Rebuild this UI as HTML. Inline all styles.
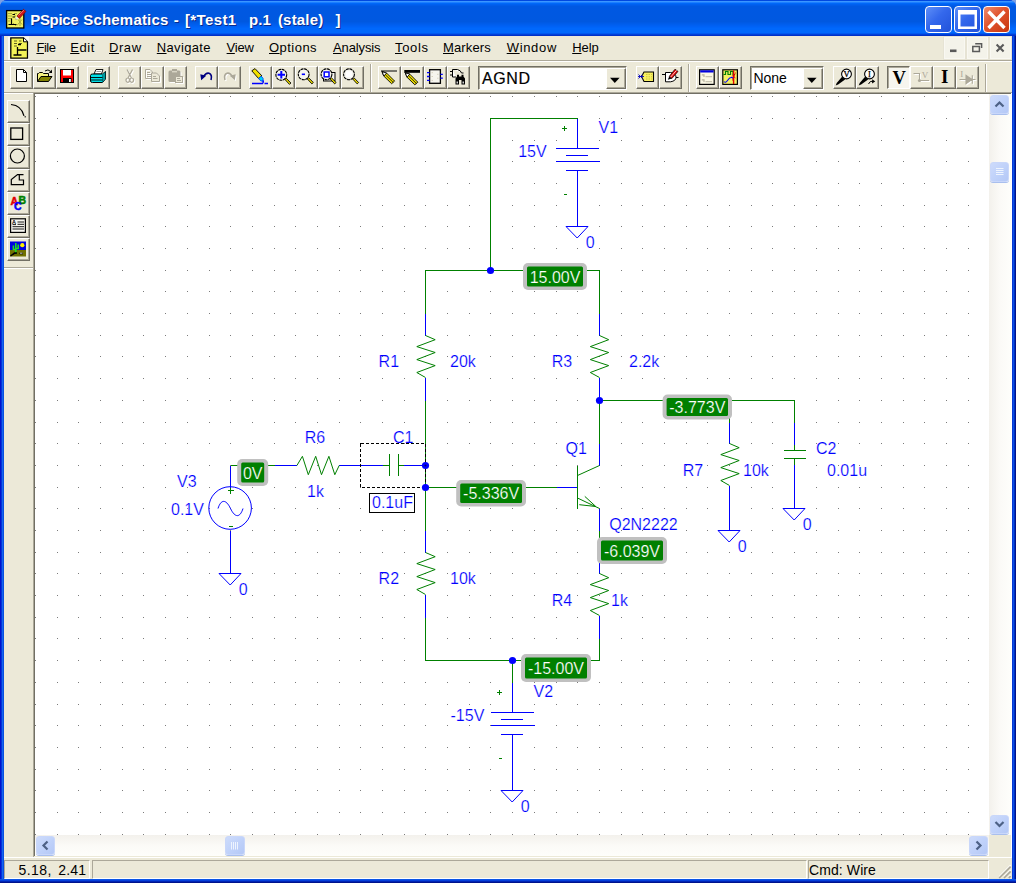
<!DOCTYPE html><html><head><meta charset="utf-8"><title>PSpice Schematics</title><style>
*{box-sizing:border-box;margin:0;padding:0}
html,body{width:1016px;height:883px;overflow:hidden;background:#7DA0E4}
body{position:relative;font-family:"Liberation Sans",sans-serif;font-size:13px;color:#000}
.abs{position:absolute}
#frame{left:0;top:0;width:1016px;height:883px;background:#0746DA;border-radius:7px 7px 0 0}
#lb{left:0;top:36px;width:4px;height:845px;background:linear-gradient(90deg,#0012CE 0.5px,#0434D8 1.5px,#1464F0 2.5px,#0850E0 3.5px)}
#rb{left:1012px;top:36px;width:4px;height:845px;background:linear-gradient(90deg,#0838D4 0.5px,#0A50E8 1.5px,#0030C0 2.5px,#00128C 3.5px)}
#bb{left:0;top:879px;width:1016px;height:4px;background:linear-gradient(180deg,#0B54E6 0.5px,#0540DC 1.5px,#0024B4 2.5px,#00138C 3.5px)}
#title{left:0;top:0;width:1016px;height:36px;border-radius:7px 7px 0 0;
 background:linear-gradient(180deg,#0048E0 0.5px,#3A96FF 1.5px,#1C7EFF 2.5px,#0068F8 3.5px,#0060F0 4.5px,#0058E2 6.5px,#0058E0 21.5px,#0062F6 26.5px,#0068FC 28.5px,#0068FC 32.5px,#0058F0 33.5px,#0040D8 34.5px,#0030C8 35.5px)}
#ttext{left:30px;top:10px;color:#fff;font-weight:bold;font-size:15px;line-height:20px;white-space:pre;text-shadow:1px 1px 0 #0A2A8C;letter-spacing:0.43px}
#client{left:4px;top:36px;width:1008px;height:843px;background:#ECE9D8}
.mi{top:40px;height:16px;line-height:16px;font-size:13px;white-space:pre}
.mi u{text-decoration:underline;text-underline-offset:1px}
.tb{background:#ECE9D8;border-top:1px solid #fff;border-left:1px solid #fff;border-right:1px solid #716F64;border-bottom:1px solid #716F64;box-shadow:inset -1px -1px 0 #ACA899}
.tbp{background:#F6F5EE;border-top:1px solid #716F64;border-left:1px solid #716F64;border-right:1px solid #fff;border-bottom:1px solid #fff;box-shadow:inset 1px 1px 0 #ACA899}
.sep{width:2px;border-left:1px solid #ACA899;border-right:1px solid #fff}
.combo{background:#fff;border-top:1px solid #716F64;border-left:1px solid #716F64;border-right:1px solid #fff;border-bottom:1px solid #fff;box-shadow:inset 1px 1px 0 #ACA899}
.cbtn{background:#ECE9D8;border-top:1px solid #fff;border-left:1px solid #fff;border-right:1px solid #716F64;border-bottom:1px solid #716F64;box-shadow:inset -1px -1px 0 #ACA899}
.sb{background:#ECE9D8}
.sbtn{background:linear-gradient(135deg,#CDDBFB 0,#C0D2FA 50%,#B4C8F6 100%);border:1px solid #C9D7FA;border-radius:3px;box-shadow:0 1px 0 #A9BFEE}
.sp{border-top:1px solid #ACA899;border-left:1px solid #ACA899;border-right:1px solid #fff;border-bottom:1px solid #fff}
</style></head><body>
<div id="frame" class="abs"></div>
<div id="title" class="abs"></div><div id="lb" class="abs"></div><div id="rb" class="abs"></div><div id="bb" class="abs"></div>
<div id="client" class="abs"></div>
<div id="ttext" class="abs" style="left:0;width:400px;height:20px"><span class="abs" style="left:30.2px;top:0;letter-spacing:-0.3px">PSpice</span><span class="abs" style="left:83.2px;top:0;letter-spacing:0.2px">Schematics</span><span class="abs" style="left:173.8px;top:0;letter-spacing:0.9px">-</span><span class="abs" style="left:184.9px;top:0;letter-spacing:0.4px">[*Test1</span><span class="abs" style="left:248.9px;top:0;letter-spacing:0.1px">p.1</span><span class="abs" style="left:277.9px;top:0;letter-spacing:0.2px">(stale)</span><span class="abs" style="left:335.6px;top:0;letter-spacing:0px">]</span></div>
<div class="abs" style="left:925px;top:6px;width:27px;height:27px;border:1px solid #fff;border-radius:4px;background:linear-gradient(135deg,#5F8FF8 0,#3468EC 45%,#2252DA 100%)"></div>
<div class="abs" style="left:954px;top:6px;width:27px;height:27px;border:1px solid #fff;border-radius:4px;background:linear-gradient(135deg,#5F8FF8 0,#3468EC 45%,#2252DA 100%)"></div>
<div class="abs" style="left:983px;top:6px;width:27px;height:27px;border:1px solid #fff;border-radius:4px;background:linear-gradient(135deg,#EE8B6C 0,#E0532E 45%,#C8370F 100%)"></div>
<div class="abs mi" id="m_File" style="left:36.4px;letter-spacing:-0.44px"><u>F</u>ile</div>
<div class="abs mi" id="m_Edit" style="left:70.2px;letter-spacing:0.55px"><u>E</u>dit</div>
<div class="abs mi" id="m_Draw" style="left:109px;letter-spacing:0.57px"><u>D</u>raw</div>
<div class="abs mi" id="m_Navigate" style="left:156.8px;letter-spacing:0.34px"><u>N</u>avigate</div>
<div class="abs mi" id="m_View" style="left:226.6px;letter-spacing:-0.21px"><u>V</u>iew</div>
<div class="abs mi" id="m_Options" style="left:269px;letter-spacing:0.46px"><u>O</u>ptions</div>
<div class="abs mi" id="m_Analysis" style="left:333px;letter-spacing:-0.125px"><u>A</u>nalysis</div>
<div class="abs mi" id="m_Tools" style="left:395px;letter-spacing:0.64px"><u>T</u>ools</div>
<div class="abs mi" id="m_Markers" style="left:443px;letter-spacing:0.14px"><u>M</u>arkers</div>
<div class="abs mi" id="m_Window" style="left:506.7px;letter-spacing:0.68px"><u>W</u>indow</div>
<div class="abs mi" id="m_Help" style="left:572.2px;letter-spacing:-0.06px"><u>H</u>elp</div>
<div class="abs" style="left:4px;top:60px;width:1008px;height:1px;background:#ACA899"></div>
<div class="abs" style="left:4px;top:61px;width:1008px;height:1px;background:#fff"></div>
<div class="abs" style="left:944px;top:37px;width:21px;height:22px;background:#F4F3EA;border:1px solid #F9F8F2;box-shadow:0 0 0 1px #E6E3D4"></div>
<div class="abs" style="left:967px;top:37px;width:21px;height:22px;background:#F4F3EA;border:1px solid #F9F8F2;box-shadow:0 0 0 1px #E6E3D4"></div>
<div class="abs" style="left:990px;top:37px;width:21px;height:22px;background:#F4F3EA;border:1px solid #F9F8F2;box-shadow:0 0 0 1px #E6E3D4"></div>
<div class="abs tb" style="left:10px;top:66px;width:23px;height:23px"></div>
<div class="abs tb" style="left:33px;top:66px;width:23px;height:23px"></div>
<div class="abs tb" style="left:56px;top:66px;width:23px;height:23px"></div>
<div class="abs tb" style="left:87px;top:66px;width:23px;height:23px"></div>
<div class="abs tb" style="left:118px;top:66px;width:23px;height:23px"></div>
<div class="abs tb" style="left:141px;top:66px;width:23px;height:23px"></div>
<div class="abs tb" style="left:164px;top:66px;width:23px;height:23px"></div>
<div class="abs tb" style="left:195px;top:66px;width:23px;height:23px"></div>
<div class="abs tb" style="left:218px;top:66px;width:23px;height:23px"></div>
<div class="abs tb" style="left:249px;top:66px;width:23px;height:23px"></div>
<div class="abs tb" style="left:272px;top:66px;width:23px;height:23px"></div>
<div class="abs tb" style="left:295px;top:66px;width:23px;height:23px"></div>
<div class="abs tb" style="left:318px;top:66px;width:23px;height:23px"></div>
<div class="abs tb" style="left:341px;top:66px;width:23px;height:23px"></div>
<div class="abs tb" style="left:378px;top:66px;width:23px;height:23px"></div>
<div class="abs tb" style="left:401px;top:66px;width:23px;height:23px"></div>
<div class="abs tb" style="left:424px;top:66px;width:23px;height:23px"></div>
<div class="abs tb" style="left:447px;top:66px;width:23px;height:23px"></div>
<div class="abs tb" style="left:636px;top:66px;width:23px;height:23px"></div>
<div class="abs tb" style="left:659px;top:66px;width:23px;height:23px"></div>
<div class="abs tb" style="left:696px;top:66px;width:23px;height:23px"></div>
<div class="abs tb" style="left:719px;top:66px;width:23px;height:23px"></div>
<div class="abs tb" style="left:833px;top:66px;width:23px;height:23px"></div>
<div class="abs tb" style="left:856px;top:66px;width:23px;height:23px"></div>
<div class="abs tb" style="left:910px;top:66px;width:23px;height:23px"></div>
<div class="abs tb" style="left:933px;top:66px;width:23px;height:23px"></div>
<div class="abs tb" style="left:956px;top:66px;width:23px;height:23px"></div>
<div class="abs tbp" style="left:887px;top:66px;width:23px;height:23px"></div>
<div class="abs sep" style="left:370px;top:64px;height:28px"></div>
<div class="abs sep" style="left:688px;top:64px;height:28px"></div>
<div class="abs sep" style="left:985px;top:64px;height:28px"></div>
<div class="abs combo" style="left:478px;top:66px;width:149px;height:24px"></div>
<div class="abs cbtn" style="left:606px;top:68px;width:20px;height:21px"></div>
<div class="abs" style="left:482px;top:69px;font-size:16px;line-height:20px;letter-spacing:0.6px;-webkit-text-stroke:0.2px #000">AGND</div>
<div class="abs combo" style="left:750px;top:66px;width:74px;height:24px"></div>
<div class="abs cbtn" style="left:803px;top:68px;width:20px;height:21px"></div>
<div class="abs" style="left:753.4px;top:68px;font-size:14px;line-height:20px">None</div>
<div class="abs" style="left:4px;top:92px;width:30px;height:1px;background:#ACA899"></div>
<div class="abs" style="left:4px;top:93px;width:30px;height:1px;background:#fff"></div>
<div class="abs tb" style="left:7px;top:100px;width:23px;height:23px"></div>
<div class="abs tb" style="left:7px;top:123px;width:23px;height:23px"></div>
<div class="abs tb" style="left:7px;top:146px;width:23px;height:23px"></div>
<div class="abs tb" style="left:7px;top:169px;width:23px;height:23px"></div>
<div class="abs tb" style="left:7px;top:192px;width:23px;height:23px"></div>
<div class="abs tb" style="left:7px;top:215px;width:23px;height:23px"></div>
<div class="abs tb" style="left:7px;top:238px;width:23px;height:23px"></div>
<div class="abs" style="left:4px;top:267px;width:29px;height:1px;background:#ACA899"></div>
<div class="abs" style="left:4px;top:268px;width:29px;height:1px;background:#fff"></div>
<div class="abs" style="left:33px;top:92px;width:979px;height:765px;background:#ECE9D8;border-left:1px solid #ACA899;border-top:1px solid #ACA899"></div>
<div class="abs" style="left:34px;top:93px;width:977px;height:763px;background:#ECE9D8;border-left:1px solid #716F64;border-top:1px solid #716F64"></div>
<div class="abs" style="left:35px;top:94px;width:954px;height:741px;background:#fff"></div>
<div class="abs" style="left:989px;top:94px;width:22px;height:741px;background:linear-gradient(90deg,#F3F1EC 0,#FBFAF7 50%,#FEFEFB 100%)"></div>
<div class="abs" style="left:35px;top:835px;width:954px;height:21px;background:linear-gradient(180deg,#F3F1EC 0,#FBFAF7 50%,#FEFEFB 100%)"></div>
<div class="abs sbtn" style="left:990px;top:95px;width:19px;height:19px"></div>
<div class="abs sbtn" style="left:990px;top:815px;width:19px;height:19px"></div>
<div class="abs sbtn" style="left:990px;top:162px;width:19px;height:20px"></div>
<div class="abs sbtn" style="left:36px;top:836px;width:19px;height:19px"></div>
<div class="abs sbtn" style="left:969px;top:836px;width:19px;height:19px"></div>
<div class="abs sbtn" style="left:225px;top:836px;width:20px;height:19px"></div>
<div class="abs" style="left:1011px;top:93px;width:1px;height:765px;background:#fff"></div>
<div class="abs" style="left:4px;top:857px;width:1008px;height:1px;background:#fff"></div>
<div class="abs sp" style="left:4px;top:860px;width:86px;height:19px"></div>
<div class="abs sp" style="left:92px;top:860px;width:715px;height:19px"></div>
<div class="abs sp" style="left:808px;top:860px;width:181px;height:19px"></div>
<div class="abs" style="left:18.5px;top:862px;font-size:14px;line-height:16px;white-space:pre;letter-spacing:0.45px">5.18,</div>
<div class="abs" style="left:58.2px;top:862px;font-size:14px;line-height:16px;white-space:pre;letter-spacing:0.2px">2.41</div>
<div class="abs" style="left:809px;top:862px;font-size:14px;line-height:16px;white-space:pre;letter-spacing:0.1px">Cmd: Wire</div>
<svg class="abs" style="left:0;top:0" width="1016" height="883" viewBox="0 0 1016 883" font-family="Liberation Sans, sans-serif">
<path d="M35 96.5h1M57 96.5h1M78 96.5h1M100 96.5h1M122 96.5h1M143 96.5h1M165 96.5h1M187 96.5h1M209 96.5h1M230 96.5h1M252 96.5h1M274 96.5h1M295 96.5h1M317 96.5h1M339 96.5h1M360 96.5h1M382 96.5h1M404 96.5h1M425 96.5h1M447 96.5h1M469 96.5h1M490 96.5h1M512 96.5h1M534 96.5h1M556 96.5h1M577 96.5h1M599 96.5h1M621 96.5h1M642 96.5h1M664 96.5h1M686 96.5h1M707 96.5h1M729 96.5h1M751 96.5h1M772 96.5h1M794 96.5h1M816 96.5h1M838 96.5h1M859 96.5h1M881 96.5h1M903 96.5h1M924 96.5h1M946 96.5h1M968 96.5h1M35 118.5h1M57 118.5h1M78 118.5h1M100 118.5h1M122 118.5h1M143 118.5h1M165 118.5h1M187 118.5h1M209 118.5h1M230 118.5h1M252 118.5h1M274 118.5h1M295 118.5h1M317 118.5h1M339 118.5h1M360 118.5h1M382 118.5h1M404 118.5h1M425 118.5h1M447 118.5h1M469 118.5h1M490 118.5h1M512 118.5h1M534 118.5h1M556 118.5h1M577 118.5h1M599 118.5h1M621 118.5h1M642 118.5h1M664 118.5h1M686 118.5h1M707 118.5h1M729 118.5h1M751 118.5h1M772 118.5h1M794 118.5h1M816 118.5h1M838 118.5h1M859 118.5h1M881 118.5h1M903 118.5h1M924 118.5h1M946 118.5h1M968 118.5h1M35 140.5h1M57 140.5h1M78 140.5h1M100 140.5h1M122 140.5h1M143 140.5h1M165 140.5h1M187 140.5h1M209 140.5h1M230 140.5h1M252 140.5h1M274 140.5h1M295 140.5h1M317 140.5h1M339 140.5h1M360 140.5h1M382 140.5h1M404 140.5h1M425 140.5h1M447 140.5h1M469 140.5h1M490 140.5h1M512 140.5h1M534 140.5h1M556 140.5h1M577 140.5h1M599 140.5h1M621 140.5h1M642 140.5h1M664 140.5h1M686 140.5h1M707 140.5h1M729 140.5h1M751 140.5h1M772 140.5h1M794 140.5h1M816 140.5h1M838 140.5h1M859 140.5h1M881 140.5h1M903 140.5h1M924 140.5h1M946 140.5h1M968 140.5h1M35 161.5h1M57 161.5h1M78 161.5h1M100 161.5h1M122 161.5h1M143 161.5h1M165 161.5h1M187 161.5h1M209 161.5h1M230 161.5h1M252 161.5h1M274 161.5h1M295 161.5h1M317 161.5h1M339 161.5h1M360 161.5h1M382 161.5h1M404 161.5h1M425 161.5h1M447 161.5h1M469 161.5h1M490 161.5h1M512 161.5h1M534 161.5h1M556 161.5h1M577 161.5h1M599 161.5h1M621 161.5h1M642 161.5h1M664 161.5h1M686 161.5h1M707 161.5h1M729 161.5h1M751 161.5h1M772 161.5h1M794 161.5h1M816 161.5h1M838 161.5h1M859 161.5h1M881 161.5h1M903 161.5h1M924 161.5h1M946 161.5h1M968 161.5h1M35 183.5h1M57 183.5h1M78 183.5h1M100 183.5h1M122 183.5h1M143 183.5h1M165 183.5h1M187 183.5h1M209 183.5h1M230 183.5h1M252 183.5h1M274 183.5h1M295 183.5h1M317 183.5h1M339 183.5h1M360 183.5h1M382 183.5h1M404 183.5h1M425 183.5h1M447 183.5h1M469 183.5h1M490 183.5h1M512 183.5h1M534 183.5h1M556 183.5h1M577 183.5h1M599 183.5h1M621 183.5h1M642 183.5h1M664 183.5h1M686 183.5h1M707 183.5h1M729 183.5h1M751 183.5h1M772 183.5h1M794 183.5h1M816 183.5h1M838 183.5h1M859 183.5h1M881 183.5h1M903 183.5h1M924 183.5h1M946 183.5h1M968 183.5h1M35 205.5h1M57 205.5h1M78 205.5h1M100 205.5h1M122 205.5h1M143 205.5h1M165 205.5h1M187 205.5h1M209 205.5h1M230 205.5h1M252 205.5h1M274 205.5h1M295 205.5h1M317 205.5h1M339 205.5h1M360 205.5h1M382 205.5h1M404 205.5h1M425 205.5h1M447 205.5h1M469 205.5h1M490 205.5h1M512 205.5h1M534 205.5h1M556 205.5h1M577 205.5h1M599 205.5h1M621 205.5h1M642 205.5h1M664 205.5h1M686 205.5h1M707 205.5h1M729 205.5h1M751 205.5h1M772 205.5h1M794 205.5h1M816 205.5h1M838 205.5h1M859 205.5h1M881 205.5h1M903 205.5h1M924 205.5h1M946 205.5h1M968 205.5h1M35 226.5h1M57 226.5h1M78 226.5h1M100 226.5h1M122 226.5h1M143 226.5h1M165 226.5h1M187 226.5h1M209 226.5h1M230 226.5h1M252 226.5h1M274 226.5h1M295 226.5h1M317 226.5h1M339 226.5h1M360 226.5h1M382 226.5h1M404 226.5h1M425 226.5h1M447 226.5h1M469 226.5h1M490 226.5h1M512 226.5h1M534 226.5h1M556 226.5h1M577 226.5h1M599 226.5h1M621 226.5h1M642 226.5h1M664 226.5h1M686 226.5h1M707 226.5h1M729 226.5h1M751 226.5h1M772 226.5h1M794 226.5h1M816 226.5h1M838 226.5h1M859 226.5h1M881 226.5h1M903 226.5h1M924 226.5h1M946 226.5h1M968 226.5h1M35 248.5h1M57 248.5h1M78 248.5h1M100 248.5h1M122 248.5h1M143 248.5h1M165 248.5h1M187 248.5h1M209 248.5h1M230 248.5h1M252 248.5h1M274 248.5h1M295 248.5h1M317 248.5h1M339 248.5h1M360 248.5h1M382 248.5h1M404 248.5h1M425 248.5h1M447 248.5h1M469 248.5h1M490 248.5h1M512 248.5h1M534 248.5h1M556 248.5h1M577 248.5h1M599 248.5h1M621 248.5h1M642 248.5h1M664 248.5h1M686 248.5h1M707 248.5h1M729 248.5h1M751 248.5h1M772 248.5h1M794 248.5h1M816 248.5h1M838 248.5h1M859 248.5h1M881 248.5h1M903 248.5h1M924 248.5h1M946 248.5h1M968 248.5h1M35 270.5h1M57 270.5h1M78 270.5h1M100 270.5h1M122 270.5h1M143 270.5h1M165 270.5h1M187 270.5h1M209 270.5h1M230 270.5h1M252 270.5h1M274 270.5h1M295 270.5h1M317 270.5h1M339 270.5h1M360 270.5h1M382 270.5h1M404 270.5h1M425 270.5h1M447 270.5h1M469 270.5h1M490 270.5h1M512 270.5h1M534 270.5h1M556 270.5h1M577 270.5h1M599 270.5h1M621 270.5h1M642 270.5h1M664 270.5h1M686 270.5h1M707 270.5h1M729 270.5h1M751 270.5h1M772 270.5h1M794 270.5h1M816 270.5h1M838 270.5h1M859 270.5h1M881 270.5h1M903 270.5h1M924 270.5h1M946 270.5h1M968 270.5h1M35 291.5h1M57 291.5h1M78 291.5h1M100 291.5h1M122 291.5h1M143 291.5h1M165 291.5h1M187 291.5h1M209 291.5h1M230 291.5h1M252 291.5h1M274 291.5h1M295 291.5h1M317 291.5h1M339 291.5h1M360 291.5h1M382 291.5h1M404 291.5h1M425 291.5h1M447 291.5h1M469 291.5h1M490 291.5h1M512 291.5h1M534 291.5h1M556 291.5h1M577 291.5h1M599 291.5h1M621 291.5h1M642 291.5h1M664 291.5h1M686 291.5h1M707 291.5h1M729 291.5h1M751 291.5h1M772 291.5h1M794 291.5h1M816 291.5h1M838 291.5h1M859 291.5h1M881 291.5h1M903 291.5h1M924 291.5h1M946 291.5h1M968 291.5h1M35 313.5h1M57 313.5h1M78 313.5h1M100 313.5h1M122 313.5h1M143 313.5h1M165 313.5h1M187 313.5h1M209 313.5h1M230 313.5h1M252 313.5h1M274 313.5h1M295 313.5h1M317 313.5h1M339 313.5h1M360 313.5h1M382 313.5h1M404 313.5h1M425 313.5h1M447 313.5h1M469 313.5h1M490 313.5h1M512 313.5h1M534 313.5h1M556 313.5h1M577 313.5h1M599 313.5h1M621 313.5h1M642 313.5h1M664 313.5h1M686 313.5h1M707 313.5h1M729 313.5h1M751 313.5h1M772 313.5h1M794 313.5h1M816 313.5h1M838 313.5h1M859 313.5h1M881 313.5h1M903 313.5h1M924 313.5h1M946 313.5h1M968 313.5h1M35 335.5h1M57 335.5h1M78 335.5h1M100 335.5h1M122 335.5h1M143 335.5h1M165 335.5h1M187 335.5h1M209 335.5h1M230 335.5h1M252 335.5h1M274 335.5h1M295 335.5h1M317 335.5h1M339 335.5h1M360 335.5h1M382 335.5h1M404 335.5h1M425 335.5h1M447 335.5h1M469 335.5h1M490 335.5h1M512 335.5h1M534 335.5h1M556 335.5h1M577 335.5h1M599 335.5h1M621 335.5h1M642 335.5h1M664 335.5h1M686 335.5h1M707 335.5h1M729 335.5h1M751 335.5h1M772 335.5h1M794 335.5h1M816 335.5h1M838 335.5h1M859 335.5h1M881 335.5h1M903 335.5h1M924 335.5h1M946 335.5h1M968 335.5h1M35 356.5h1M57 356.5h1M78 356.5h1M100 356.5h1M122 356.5h1M143 356.5h1M165 356.5h1M187 356.5h1M209 356.5h1M230 356.5h1M252 356.5h1M274 356.5h1M295 356.5h1M317 356.5h1M339 356.5h1M360 356.5h1M382 356.5h1M404 356.5h1M425 356.5h1M447 356.5h1M469 356.5h1M490 356.5h1M512 356.5h1M534 356.5h1M556 356.5h1M577 356.5h1M599 356.5h1M621 356.5h1M642 356.5h1M664 356.5h1M686 356.5h1M707 356.5h1M729 356.5h1M751 356.5h1M772 356.5h1M794 356.5h1M816 356.5h1M838 356.5h1M859 356.5h1M881 356.5h1M903 356.5h1M924 356.5h1M946 356.5h1M968 356.5h1M35 378.5h1M57 378.5h1M78 378.5h1M100 378.5h1M122 378.5h1M143 378.5h1M165 378.5h1M187 378.5h1M209 378.5h1M230 378.5h1M252 378.5h1M274 378.5h1M295 378.5h1M317 378.5h1M339 378.5h1M360 378.5h1M382 378.5h1M404 378.5h1M425 378.5h1M447 378.5h1M469 378.5h1M490 378.5h1M512 378.5h1M534 378.5h1M556 378.5h1M577 378.5h1M599 378.5h1M621 378.5h1M642 378.5h1M664 378.5h1M686 378.5h1M707 378.5h1M729 378.5h1M751 378.5h1M772 378.5h1M794 378.5h1M816 378.5h1M838 378.5h1M859 378.5h1M881 378.5h1M903 378.5h1M924 378.5h1M946 378.5h1M968 378.5h1M35 400.5h1M57 400.5h1M78 400.5h1M100 400.5h1M122 400.5h1M143 400.5h1M165 400.5h1M187 400.5h1M209 400.5h1M230 400.5h1M252 400.5h1M274 400.5h1M295 400.5h1M317 400.5h1M339 400.5h1M360 400.5h1M382 400.5h1M404 400.5h1M425 400.5h1M447 400.5h1M469 400.5h1M490 400.5h1M512 400.5h1M534 400.5h1M556 400.5h1M577 400.5h1M599 400.5h1M621 400.5h1M642 400.5h1M664 400.5h1M686 400.5h1M707 400.5h1M729 400.5h1M751 400.5h1M772 400.5h1M794 400.5h1M816 400.5h1M838 400.5h1M859 400.5h1M881 400.5h1M903 400.5h1M924 400.5h1M946 400.5h1M968 400.5h1M35 422.5h1M57 422.5h1M78 422.5h1M100 422.5h1M122 422.5h1M143 422.5h1M165 422.5h1M187 422.5h1M209 422.5h1M230 422.5h1M252 422.5h1M274 422.5h1M295 422.5h1M317 422.5h1M339 422.5h1M360 422.5h1M382 422.5h1M404 422.5h1M425 422.5h1M447 422.5h1M469 422.5h1M490 422.5h1M512 422.5h1M534 422.5h1M556 422.5h1M577 422.5h1M599 422.5h1M621 422.5h1M642 422.5h1M664 422.5h1M686 422.5h1M707 422.5h1M729 422.5h1M751 422.5h1M772 422.5h1M794 422.5h1M816 422.5h1M838 422.5h1M859 422.5h1M881 422.5h1M903 422.5h1M924 422.5h1M946 422.5h1M968 422.5h1M35 443.5h1M57 443.5h1M78 443.5h1M100 443.5h1M122 443.5h1M143 443.5h1M165 443.5h1M187 443.5h1M209 443.5h1M230 443.5h1M252 443.5h1M274 443.5h1M295 443.5h1M317 443.5h1M339 443.5h1M360 443.5h1M382 443.5h1M404 443.5h1M425 443.5h1M447 443.5h1M469 443.5h1M490 443.5h1M512 443.5h1M534 443.5h1M556 443.5h1M577 443.5h1M599 443.5h1M621 443.5h1M642 443.5h1M664 443.5h1M686 443.5h1M707 443.5h1M729 443.5h1M751 443.5h1M772 443.5h1M794 443.5h1M816 443.5h1M838 443.5h1M859 443.5h1M881 443.5h1M903 443.5h1M924 443.5h1M946 443.5h1M968 443.5h1M35 465.5h1M57 465.5h1M78 465.5h1M100 465.5h1M122 465.5h1M143 465.5h1M165 465.5h1M187 465.5h1M209 465.5h1M230 465.5h1M252 465.5h1M274 465.5h1M295 465.5h1M317 465.5h1M339 465.5h1M360 465.5h1M382 465.5h1M404 465.5h1M425 465.5h1M447 465.5h1M469 465.5h1M490 465.5h1M512 465.5h1M534 465.5h1M556 465.5h1M577 465.5h1M599 465.5h1M621 465.5h1M642 465.5h1M664 465.5h1M686 465.5h1M707 465.5h1M729 465.5h1M751 465.5h1M772 465.5h1M794 465.5h1M816 465.5h1M838 465.5h1M859 465.5h1M881 465.5h1M903 465.5h1M924 465.5h1M946 465.5h1M968 465.5h1M35 487.5h1M57 487.5h1M78 487.5h1M100 487.5h1M122 487.5h1M143 487.5h1M165 487.5h1M187 487.5h1M209 487.5h1M230 487.5h1M252 487.5h1M274 487.5h1M295 487.5h1M317 487.5h1M339 487.5h1M360 487.5h1M382 487.5h1M404 487.5h1M425 487.5h1M447 487.5h1M469 487.5h1M490 487.5h1M512 487.5h1M534 487.5h1M556 487.5h1M577 487.5h1M599 487.5h1M621 487.5h1M642 487.5h1M664 487.5h1M686 487.5h1M707 487.5h1M729 487.5h1M751 487.5h1M772 487.5h1M794 487.5h1M816 487.5h1M838 487.5h1M859 487.5h1M881 487.5h1M903 487.5h1M924 487.5h1M946 487.5h1M968 487.5h1M35 508.5h1M57 508.5h1M78 508.5h1M100 508.5h1M122 508.5h1M143 508.5h1M165 508.5h1M187 508.5h1M209 508.5h1M230 508.5h1M252 508.5h1M274 508.5h1M295 508.5h1M317 508.5h1M339 508.5h1M360 508.5h1M382 508.5h1M404 508.5h1M425 508.5h1M447 508.5h1M469 508.5h1M490 508.5h1M512 508.5h1M534 508.5h1M556 508.5h1M577 508.5h1M599 508.5h1M621 508.5h1M642 508.5h1M664 508.5h1M686 508.5h1M707 508.5h1M729 508.5h1M751 508.5h1M772 508.5h1M794 508.5h1M816 508.5h1M838 508.5h1M859 508.5h1M881 508.5h1M903 508.5h1M924 508.5h1M946 508.5h1M968 508.5h1M35 530.5h1M57 530.5h1M78 530.5h1M100 530.5h1M122 530.5h1M143 530.5h1M165 530.5h1M187 530.5h1M209 530.5h1M230 530.5h1M252 530.5h1M274 530.5h1M295 530.5h1M317 530.5h1M339 530.5h1M360 530.5h1M382 530.5h1M404 530.5h1M425 530.5h1M447 530.5h1M469 530.5h1M490 530.5h1M512 530.5h1M534 530.5h1M556 530.5h1M577 530.5h1M599 530.5h1M621 530.5h1M642 530.5h1M664 530.5h1M686 530.5h1M707 530.5h1M729 530.5h1M751 530.5h1M772 530.5h1M794 530.5h1M816 530.5h1M838 530.5h1M859 530.5h1M881 530.5h1M903 530.5h1M924 530.5h1M946 530.5h1M968 530.5h1M35 552.5h1M57 552.5h1M78 552.5h1M100 552.5h1M122 552.5h1M143 552.5h1M165 552.5h1M187 552.5h1M209 552.5h1M230 552.5h1M252 552.5h1M274 552.5h1M295 552.5h1M317 552.5h1M339 552.5h1M360 552.5h1M382 552.5h1M404 552.5h1M425 552.5h1M447 552.5h1M469 552.5h1M490 552.5h1M512 552.5h1M534 552.5h1M556 552.5h1M577 552.5h1M599 552.5h1M621 552.5h1M642 552.5h1M664 552.5h1M686 552.5h1M707 552.5h1M729 552.5h1M751 552.5h1M772 552.5h1M794 552.5h1M816 552.5h1M838 552.5h1M859 552.5h1M881 552.5h1M903 552.5h1M924 552.5h1M946 552.5h1M968 552.5h1M35 573.5h1M57 573.5h1M78 573.5h1M100 573.5h1M122 573.5h1M143 573.5h1M165 573.5h1M187 573.5h1M209 573.5h1M230 573.5h1M252 573.5h1M274 573.5h1M295 573.5h1M317 573.5h1M339 573.5h1M360 573.5h1M382 573.5h1M404 573.5h1M425 573.5h1M447 573.5h1M469 573.5h1M490 573.5h1M512 573.5h1M534 573.5h1M556 573.5h1M577 573.5h1M599 573.5h1M621 573.5h1M642 573.5h1M664 573.5h1M686 573.5h1M707 573.5h1M729 573.5h1M751 573.5h1M772 573.5h1M794 573.5h1M816 573.5h1M838 573.5h1M859 573.5h1M881 573.5h1M903 573.5h1M924 573.5h1M946 573.5h1M968 573.5h1M35 595.5h1M57 595.5h1M78 595.5h1M100 595.5h1M122 595.5h1M143 595.5h1M165 595.5h1M187 595.5h1M209 595.5h1M230 595.5h1M252 595.5h1M274 595.5h1M295 595.5h1M317 595.5h1M339 595.5h1M360 595.5h1M382 595.5h1M404 595.5h1M425 595.5h1M447 595.5h1M469 595.5h1M490 595.5h1M512 595.5h1M534 595.5h1M556 595.5h1M577 595.5h1M599 595.5h1M621 595.5h1M642 595.5h1M664 595.5h1M686 595.5h1M707 595.5h1M729 595.5h1M751 595.5h1M772 595.5h1M794 595.5h1M816 595.5h1M838 595.5h1M859 595.5h1M881 595.5h1M903 595.5h1M924 595.5h1M946 595.5h1M968 595.5h1M35 617.5h1M57 617.5h1M78 617.5h1M100 617.5h1M122 617.5h1M143 617.5h1M165 617.5h1M187 617.5h1M209 617.5h1M230 617.5h1M252 617.5h1M274 617.5h1M295 617.5h1M317 617.5h1M339 617.5h1M360 617.5h1M382 617.5h1M404 617.5h1M425 617.5h1M447 617.5h1M469 617.5h1M490 617.5h1M512 617.5h1M534 617.5h1M556 617.5h1M577 617.5h1M599 617.5h1M621 617.5h1M642 617.5h1M664 617.5h1M686 617.5h1M707 617.5h1M729 617.5h1M751 617.5h1M772 617.5h1M794 617.5h1M816 617.5h1M838 617.5h1M859 617.5h1M881 617.5h1M903 617.5h1M924 617.5h1M946 617.5h1M968 617.5h1M35 638.5h1M57 638.5h1M78 638.5h1M100 638.5h1M122 638.5h1M143 638.5h1M165 638.5h1M187 638.5h1M209 638.5h1M230 638.5h1M252 638.5h1M274 638.5h1M295 638.5h1M317 638.5h1M339 638.5h1M360 638.5h1M382 638.5h1M404 638.5h1M425 638.5h1M447 638.5h1M469 638.5h1M490 638.5h1M512 638.5h1M534 638.5h1M556 638.5h1M577 638.5h1M599 638.5h1M621 638.5h1M642 638.5h1M664 638.5h1M686 638.5h1M707 638.5h1M729 638.5h1M751 638.5h1M772 638.5h1M794 638.5h1M816 638.5h1M838 638.5h1M859 638.5h1M881 638.5h1M903 638.5h1M924 638.5h1M946 638.5h1M968 638.5h1M35 660.5h1M57 660.5h1M78 660.5h1M100 660.5h1M122 660.5h1M143 660.5h1M165 660.5h1M187 660.5h1M209 660.5h1M230 660.5h1M252 660.5h1M274 660.5h1M295 660.5h1M317 660.5h1M339 660.5h1M360 660.5h1M382 660.5h1M404 660.5h1M425 660.5h1M447 660.5h1M469 660.5h1M490 660.5h1M512 660.5h1M534 660.5h1M556 660.5h1M577 660.5h1M599 660.5h1M621 660.5h1M642 660.5h1M664 660.5h1M686 660.5h1M707 660.5h1M729 660.5h1M751 660.5h1M772 660.5h1M794 660.5h1M816 660.5h1M838 660.5h1M859 660.5h1M881 660.5h1M903 660.5h1M924 660.5h1M946 660.5h1M968 660.5h1M35 682.5h1M57 682.5h1M78 682.5h1M100 682.5h1M122 682.5h1M143 682.5h1M165 682.5h1M187 682.5h1M209 682.5h1M230 682.5h1M252 682.5h1M274 682.5h1M295 682.5h1M317 682.5h1M339 682.5h1M360 682.5h1M382 682.5h1M404 682.5h1M425 682.5h1M447 682.5h1M469 682.5h1M490 682.5h1M512 682.5h1M534 682.5h1M556 682.5h1M577 682.5h1M599 682.5h1M621 682.5h1M642 682.5h1M664 682.5h1M686 682.5h1M707 682.5h1M729 682.5h1M751 682.5h1M772 682.5h1M794 682.5h1M816 682.5h1M838 682.5h1M859 682.5h1M881 682.5h1M903 682.5h1M924 682.5h1M946 682.5h1M968 682.5h1M35 704.5h1M57 704.5h1M78 704.5h1M100 704.5h1M122 704.5h1M143 704.5h1M165 704.5h1M187 704.5h1M209 704.5h1M230 704.5h1M252 704.5h1M274 704.5h1M295 704.5h1M317 704.5h1M339 704.5h1M360 704.5h1M382 704.5h1M404 704.5h1M425 704.5h1M447 704.5h1M469 704.5h1M490 704.5h1M512 704.5h1M534 704.5h1M556 704.5h1M577 704.5h1M599 704.5h1M621 704.5h1M642 704.5h1M664 704.5h1M686 704.5h1M707 704.5h1M729 704.5h1M751 704.5h1M772 704.5h1M794 704.5h1M816 704.5h1M838 704.5h1M859 704.5h1M881 704.5h1M903 704.5h1M924 704.5h1M946 704.5h1M968 704.5h1M35 725.5h1M57 725.5h1M78 725.5h1M100 725.5h1M122 725.5h1M143 725.5h1M165 725.5h1M187 725.5h1M209 725.5h1M230 725.5h1M252 725.5h1M274 725.5h1M295 725.5h1M317 725.5h1M339 725.5h1M360 725.5h1M382 725.5h1M404 725.5h1M425 725.5h1M447 725.5h1M469 725.5h1M490 725.5h1M512 725.5h1M534 725.5h1M556 725.5h1M577 725.5h1M599 725.5h1M621 725.5h1M642 725.5h1M664 725.5h1M686 725.5h1M707 725.5h1M729 725.5h1M751 725.5h1M772 725.5h1M794 725.5h1M816 725.5h1M838 725.5h1M859 725.5h1M881 725.5h1M903 725.5h1M924 725.5h1M946 725.5h1M968 725.5h1M35 747.5h1M57 747.5h1M78 747.5h1M100 747.5h1M122 747.5h1M143 747.5h1M165 747.5h1M187 747.5h1M209 747.5h1M230 747.5h1M252 747.5h1M274 747.5h1M295 747.5h1M317 747.5h1M339 747.5h1M360 747.5h1M382 747.5h1M404 747.5h1M425 747.5h1M447 747.5h1M469 747.5h1M490 747.5h1M512 747.5h1M534 747.5h1M556 747.5h1M577 747.5h1M599 747.5h1M621 747.5h1M642 747.5h1M664 747.5h1M686 747.5h1M707 747.5h1M729 747.5h1M751 747.5h1M772 747.5h1M794 747.5h1M816 747.5h1M838 747.5h1M859 747.5h1M881 747.5h1M903 747.5h1M924 747.5h1M946 747.5h1M968 747.5h1M35 769.5h1M57 769.5h1M78 769.5h1M100 769.5h1M122 769.5h1M143 769.5h1M165 769.5h1M187 769.5h1M209 769.5h1M230 769.5h1M252 769.5h1M274 769.5h1M295 769.5h1M317 769.5h1M339 769.5h1M360 769.5h1M382 769.5h1M404 769.5h1M425 769.5h1M447 769.5h1M469 769.5h1M490 769.5h1M512 769.5h1M534 769.5h1M556 769.5h1M577 769.5h1M599 769.5h1M621 769.5h1M642 769.5h1M664 769.5h1M686 769.5h1M707 769.5h1M729 769.5h1M751 769.5h1M772 769.5h1M794 769.5h1M816 769.5h1M838 769.5h1M859 769.5h1M881 769.5h1M903 769.5h1M924 769.5h1M946 769.5h1M968 769.5h1M35 790.5h1M57 790.5h1M78 790.5h1M100 790.5h1M122 790.5h1M143 790.5h1M165 790.5h1M187 790.5h1M209 790.5h1M230 790.5h1M252 790.5h1M274 790.5h1M295 790.5h1M317 790.5h1M339 790.5h1M360 790.5h1M382 790.5h1M404 790.5h1M425 790.5h1M447 790.5h1M469 790.5h1M490 790.5h1M512 790.5h1M534 790.5h1M556 790.5h1M577 790.5h1M599 790.5h1M621 790.5h1M642 790.5h1M664 790.5h1M686 790.5h1M707 790.5h1M729 790.5h1M751 790.5h1M772 790.5h1M794 790.5h1M816 790.5h1M838 790.5h1M859 790.5h1M881 790.5h1M903 790.5h1M924 790.5h1M946 790.5h1M968 790.5h1M35 812.5h1M57 812.5h1M78 812.5h1M100 812.5h1M122 812.5h1M143 812.5h1M165 812.5h1M187 812.5h1M209 812.5h1M230 812.5h1M252 812.5h1M274 812.5h1M295 812.5h1M317 812.5h1M339 812.5h1M360 812.5h1M382 812.5h1M404 812.5h1M425 812.5h1M447 812.5h1M469 812.5h1M490 812.5h1M512 812.5h1M534 812.5h1M556 812.5h1M577 812.5h1M599 812.5h1M621 812.5h1M642 812.5h1M664 812.5h1M686 812.5h1M707 812.5h1M729 812.5h1M751 812.5h1M772 812.5h1M794 812.5h1M816 812.5h1M838 812.5h1M859 812.5h1M881 812.5h1M903 812.5h1M924 812.5h1M946 812.5h1M968 812.5h1M35 834.5h1M57 834.5h1M78 834.5h1M100 834.5h1M122 834.5h1M143 834.5h1M165 834.5h1M187 834.5h1M209 834.5h1M230 834.5h1M252 834.5h1M274 834.5h1M295 834.5h1M317 834.5h1M339 834.5h1M360 834.5h1M382 834.5h1M404 834.5h1M425 834.5h1M447 834.5h1M469 834.5h1M490 834.5h1M512 834.5h1M534 834.5h1M556 834.5h1M577 834.5h1M599 834.5h1M621 834.5h1M642 834.5h1M664 834.5h1M686 834.5h1M707 834.5h1M729 834.5h1M751 834.5h1M772 834.5h1M794 834.5h1M816 834.5h1M838 834.5h1M859 834.5h1M881 834.5h1M903 834.5h1M924 834.5h1M946 834.5h1M968 834.5h1" stroke="#7B7B7B" stroke-width="1" shape-rendering="crispEdges" fill="none"/>
<polyline points="490.5,270.5 490.5,118.5 577.5,118.5" fill="none" stroke="#008000" stroke-width="1" shape-rendering="crispEdges"/>
<polyline points="425.5,313.5 425.5,270.5 599.5,270.5 599.5,313.5" fill="none" stroke="#008000" stroke-width="1" shape-rendering="crispEdges"/>
<polyline points="425.5,400.5 425.5,530.5" fill="none" stroke="#008000" stroke-width="1" shape-rendering="crispEdges"/>
<polyline points="425.5,487.5 556.5,487.5" fill="none" stroke="#008000" stroke-width="1" shape-rendering="crispEdges"/>
<polyline points="425.5,617.5 425.5,660.5 599.5,660.5 599.5,638.5" fill="none" stroke="#008000" stroke-width="1" shape-rendering="crispEdges"/>
<polyline points="512.5,660.5 512.5,682.5" fill="none" stroke="#008000" stroke-width="1" shape-rendering="crispEdges"/>
<polyline points="599.5,400.5 599.5,443.5" fill="none" stroke="#008000" stroke-width="1" shape-rendering="crispEdges"/>
<polyline points="599.5,400.5 794.5,400.5 794.5,422.5" fill="none" stroke="#008000" stroke-width="1" shape-rendering="crispEdges"/>
<polyline points="729.5,400.5 729.5,422.5" fill="none" stroke="#008000" stroke-width="1" shape-rendering="crispEdges"/>
<polyline points="599.5,530.5 599.5,552.5" fill="none" stroke="#008000" stroke-width="1" shape-rendering="crispEdges"/>
<polyline points="230.5,465.5 274.5,465.5" fill="none" stroke="#008000" stroke-width="1" shape-rendering="crispEdges"/>
<polyline points="230.5,487.5 230.5,465.5" fill="none" stroke="#0000FF" stroke-width="1" shape-rendering="crispEdges"/>
<polyline points="577.5,118.5 577.5,148.5" fill="none" stroke="#0000FF" stroke-width="1" shape-rendering="crispEdges"/>
<polyline points="555.5,148.5 599,148.5" fill="none" stroke="#0000FF" stroke-width="1" shape-rendering="crispEdges"/>
<polyline points="566,155.5 588,155.5" fill="none" stroke="#0000FF" stroke-width="1" shape-rendering="crispEdges"/>
<polyline points="555.5,161.5 600,161.5" fill="none" stroke="#0000FF" stroke-width="1" shape-rendering="crispEdges"/>
<polyline points="566,170.5 588,170.5" fill="none" stroke="#0000FF" stroke-width="1" shape-rendering="crispEdges"/>
<polyline points="577.5,170.5 577.5,226.5" fill="none" stroke="#0000FF" stroke-width="1" shape-rendering="crispEdges"/>
<polyline points="566,226.5 588,226.5 577.2,238 566,226.5" fill="none" stroke="#0000FF" stroke-width="1" />
<text x="585.7" y="247.8" fill="#0000FF" font-size="16" text-anchor="start" stroke="#fff" stroke-width="0.2" >0</text>
<polyline points="561.5,128 566.5,128" fill="none" stroke="#008000" stroke-width="1" shape-rendering="crispEdges"/>
<polyline points="564,125.5 564,130.5" fill="none" stroke="#008000" stroke-width="1" shape-rendering="crispEdges"/>
<polyline points="563.5,194 566.5,194" fill="none" stroke="#008000" stroke-width="1" shape-rendering="crispEdges"/>
<text x="598.5" y="133" fill="#0000FF" font-size="16" text-anchor="start" stroke="#fff" stroke-width="0.2" >V1</text>
<text x="518.2" y="156.8" fill="#0000FF" font-size="16" text-anchor="start" stroke="#fff" stroke-width="0.2" >15V</text>
<polyline points="512.5,682.5 512.5,712.5" fill="none" stroke="#0000FF" stroke-width="1" shape-rendering="crispEdges"/>
<polyline points="490.5,712.5 534,712.5" fill="none" stroke="#0000FF" stroke-width="1" shape-rendering="crispEdges"/>
<polyline points="501,719.5 523,719.5" fill="none" stroke="#0000FF" stroke-width="1" shape-rendering="crispEdges"/>
<polyline points="490.5,725.5 535,725.5" fill="none" stroke="#0000FF" stroke-width="1" shape-rendering="crispEdges"/>
<polyline points="501,734.5 523,734.5" fill="none" stroke="#0000FF" stroke-width="1" shape-rendering="crispEdges"/>
<polyline points="512.5,734.5 512.5,790.5" fill="none" stroke="#0000FF" stroke-width="1" shape-rendering="crispEdges"/>
<polyline points="501,790.5 523,790.5 512.2,802 501,790.5" fill="none" stroke="#0000FF" stroke-width="1" />
<text x="520.7" y="811.8" fill="#0000FF" font-size="16" text-anchor="start" stroke="#fff" stroke-width="0.2" >0</text>
<polyline points="496.5,692 501.5,692" fill="none" stroke="#008000" stroke-width="1" shape-rendering="crispEdges"/>
<polyline points="499,689.5 499,694.5" fill="none" stroke="#008000" stroke-width="1" shape-rendering="crispEdges"/>
<polyline points="498.5,758 501.5,758" fill="none" stroke="#008000" stroke-width="1" shape-rendering="crispEdges"/>
<text x="533.5" y="697" fill="#0000FF" font-size="16" text-anchor="start" stroke="#fff" stroke-width="0.2" >V2</text>
<text x="450.5" y="720.8" fill="#0000FF" font-size="16" text-anchor="start" stroke="#fff" stroke-width="0.2" >-15V</text>
<polyline points="425.5,313.5 425.5,335.5" fill="none" stroke="#0000FF" stroke-width="1" shape-rendering="crispEdges"/>
<polyline points="425.5,378.5 425.5,400.5" fill="none" stroke="#0000FF" stroke-width="1" shape-rendering="crispEdges"/>
<polyline points="425.5,377.5 425.5,378.5" fill="none" stroke="#0000FF" stroke-width="1" shape-rendering="crispEdges"/>
<polyline points="425.5,335.5 435.2,339.7 416.8,346.6 435.2,352.5 416.8,359.6 435.2,365.6 416.8,372.5 425.5,377.5 425.5,377.51" fill="none" stroke="#008000" stroke-width="1" />
<polyline points="599.5,313.5 599.5,335.5" fill="none" stroke="#0000FF" stroke-width="1" shape-rendering="crispEdges"/>
<polyline points="599.5,378.5 599.5,400.5" fill="none" stroke="#0000FF" stroke-width="1" shape-rendering="crispEdges"/>
<polyline points="599.5,377.5 599.5,378.5" fill="none" stroke="#0000FF" stroke-width="1" shape-rendering="crispEdges"/>
<polyline points="599.5,335.5 608.7,339.7 590.3,346.6 608.7,352.5 590.3,359.6 608.7,365.6 590.3,372.5 599.5,377.5 599.5,377.51" fill="none" stroke="#008000" stroke-width="1" />
<polyline points="425.5,530.5 425.5,552.5" fill="none" stroke="#0000FF" stroke-width="1" shape-rendering="crispEdges"/>
<polyline points="425.5,595.5 425.5,617.5" fill="none" stroke="#0000FF" stroke-width="1" shape-rendering="crispEdges"/>
<polyline points="425.5,594.5 425.5,595.5" fill="none" stroke="#0000FF" stroke-width="1" shape-rendering="crispEdges"/>
<polyline points="425.5,552.5 435.2,556.7 416.8,563.6 435.2,569.5 416.8,576.6 435.2,582.6 416.8,589.5 425.5,594.5 425.5,594.51" fill="none" stroke="#008000" stroke-width="1" />
<polyline points="599.5,552.5 599.5,573.5" fill="none" stroke="#0000FF" stroke-width="1" shape-rendering="crispEdges"/>
<polyline points="599.5,617.5 599.5,638.5" fill="none" stroke="#0000FF" stroke-width="1" shape-rendering="crispEdges"/>
<polyline points="599.5,615.5 599.5,617.5" fill="none" stroke="#0000FF" stroke-width="1" shape-rendering="crispEdges"/>
<polyline points="599.5,573.5 608.7,577.7 590.3,584.6 608.7,590.5 590.3,597.6 608.7,603.6 590.3,610.5 599.5,615.5 599.5,615.51" fill="none" stroke="#008000" stroke-width="1" />
<polyline points="729.5,422.5 729.5,443.5" fill="none" stroke="#0000FF" stroke-width="1" shape-rendering="crispEdges"/>
<polyline points="729.5,487.5 729.5,508.5" fill="none" stroke="#0000FF" stroke-width="1" shape-rendering="crispEdges"/>
<polyline points="729.5,485.5 729.5,487.5" fill="none" stroke="#0000FF" stroke-width="1" shape-rendering="crispEdges"/>
<polyline points="729.5,443.5 739.2,447.7 720.8,454.6 739.2,460.5 720.8,467.6 739.2,473.6 720.8,480.5 729.5,485.5 729.5,485.51" fill="none" stroke="#008000" stroke-width="1" />
<polyline points="274.5,465.5 295.5,465.5" fill="none" stroke="#0000FF" stroke-width="1" shape-rendering="crispEdges"/>
<polyline points="339.5,465.5 360.5,465.5" fill="none" stroke="#0000FF" stroke-width="1" shape-rendering="crispEdges"/>
<polyline points="295.5,465.5 296.9,465.5" fill="none" stroke="#0000FF" stroke-width="1" shape-rendering="crispEdges"/>
<polyline points="339.2,465.5 339.5,465.5" fill="none" stroke="#0000FF" stroke-width="1" shape-rendering="crispEdges"/>
<polyline points="296.9,465.5 302.4,456.3 308.3,474.7 315.7,456.3 321.5,474.7 328.9,456.3 334.8,474.7 339.2,465.5" fill="none" stroke="#008000" stroke-width="1" />
<polyline points="729.5,508.5 729.5,530.5" fill="none" stroke="#0000FF" stroke-width="1" shape-rendering="crispEdges"/>
<polyline points="718,530.5 740,530.5 729.2,542 718,530.5" fill="none" stroke="#0000FF" stroke-width="1" />
<text x="737.7" y="551.8" fill="#0000FF" font-size="16" text-anchor="start" stroke="#fff" stroke-width="0.2" >0</text>
<polyline points="794.5,422.5 794.5,444.5" fill="none" stroke="#0000FF" stroke-width="1" shape-rendering="crispEdges"/>
<polyline points="794.5,444.5 794.5,450.5" fill="none" stroke="#008000" stroke-width="1" shape-rendering="crispEdges"/>
<polyline points="784,450.5 805.5,450.5" fill="none" stroke="#008000" stroke-width="1" shape-rendering="crispEdges"/>
<polyline points="784,458.5 805.5,458.5" fill="none" stroke="#008000" stroke-width="1" shape-rendering="crispEdges"/>
<polyline points="794.5,458.5 794.5,464.5" fill="none" stroke="#008000" stroke-width="1" shape-rendering="crispEdges"/>
<polyline points="794.5,464.5 794.5,508.5" fill="none" stroke="#0000FF" stroke-width="1" shape-rendering="crispEdges"/>
<polyline points="783,508.5 805,508.5 794.2,520 783,508.5" fill="none" stroke="#0000FF" stroke-width="1" />
<text x="802.7" y="529.8" fill="#0000FF" font-size="16" text-anchor="start" stroke="#fff" stroke-width="0.2" >0</text>
<polyline points="360.5,465.5 383,465.5" fill="none" stroke="#0000FF" stroke-width="1" shape-rendering="crispEdges"/>
<polyline points="383,465.5 389.5,465.5" fill="none" stroke="#008000" stroke-width="1" shape-rendering="crispEdges"/>
<polyline points="389.5,453.5 389.5,475.5" fill="none" stroke="#008000" stroke-width="1" shape-rendering="crispEdges"/>
<polyline points="398.5,453.5 398.5,475.5" fill="none" stroke="#008000" stroke-width="1" shape-rendering="crispEdges"/>
<polyline points="398.5,465.5 404,465.5" fill="none" stroke="#008000" stroke-width="1" shape-rendering="crispEdges"/>
<polyline points="404,465.5 425.5,465.5" fill="none" stroke="#0000FF" stroke-width="1" shape-rendering="crispEdges"/>
<rect x="360.5" y="443.5" width="65" height="44" fill="none" stroke="#000" stroke-width="1" stroke-dasharray="3 2" shape-rendering="crispEdges"/>
<circle cx="230.1" cy="508" r="21.3" fill="none" stroke="#0000FF" stroke-width="1"/>
<path d="M218 508.5c3,-9.5 8,-9.5 12.5,0s9.5,9.5 12.5,0" fill="none" stroke="#0000FF" stroke-width="1"/>
<polyline points="230.5,530.5 230.5,573.5" fill="none" stroke="#0000FF" stroke-width="1" shape-rendering="crispEdges"/>
<polyline points="219,573.5 241,573.5 230.2,585 219,573.5" fill="none" stroke="#0000FF" stroke-width="1" />
<text x="238.7" y="594.8" fill="#0000FF" font-size="16" text-anchor="start" stroke="#fff" stroke-width="0.2" >0</text>
<polyline points="227.5,490.5 233.5,490.5" fill="none" stroke="#008000" stroke-width="1" shape-rendering="crispEdges"/>
<polyline points="230.5,488 230.5,494" fill="none" stroke="#008000" stroke-width="1" shape-rendering="crispEdges"/>
<polyline points="228.5,526.5 232.5,526.5" fill="none" stroke="#008000" stroke-width="1" shape-rendering="crispEdges"/>
<polyline points="556.5,487.5 577.5,487.5" fill="none" stroke="#0000FF" stroke-width="1" shape-rendering="crispEdges"/>
<polyline points="577.5,465.5 577.5,508.5" fill="none" stroke="#008000" stroke-width="1" shape-rendering="crispEdges"/>
<polyline points="599.5,443.5 599.5,465.5" fill="none" stroke="#0000FF" stroke-width="1" shape-rendering="crispEdges"/>
<polyline points="599.5,465.5 577.5,475.5" fill="none" stroke="#008000" stroke-width="1" />
<polyline points="577.5,498 599.5,508.5" fill="none" stroke="#008000" stroke-width="1" />
<polyline points="584.8,496.4 595.8,506.5 579.3,504.7" fill="none" stroke="#008000" stroke-width="1" />
<polyline points="599.5,508.5 599.5,530.5" fill="none" stroke="#0000FF" stroke-width="1" shape-rendering="crispEdges"/>
<circle cx="490.5" cy="270.5" r="3.6" fill="#0000FF"/>
<circle cx="599.5" cy="400.5" r="3.6" fill="#0000FF"/>
<circle cx="512.5" cy="660.5" r="3.6" fill="#0000FF"/>
<circle cx="425.5" cy="487.5" r="3.6" fill="#0000FF"/>
<circle cx="425.5" cy="465.5" r="3.6" fill="#0000FF"/><circle cx="425.5" cy="465.5" r="1" fill="#000060"/>
<text x="378.6" y="367" fill="#0000FF" font-size="16" text-anchor="start" stroke="#fff" stroke-width="0.2" >R1</text>
<text x="450" y="367" fill="#0000FF" font-size="16" text-anchor="start" stroke="#fff" stroke-width="0.2" >20k</text>
<text x="551.8" y="367" fill="#0000FF" font-size="16" text-anchor="start" stroke="#fff" stroke-width="0.2" >R3</text>
<text x="629" y="367" fill="#0000FF" font-size="16" text-anchor="start" stroke="#fff" stroke-width="0.2" >2.2k</text>
<text x="378.6" y="584" fill="#0000FF" font-size="16" text-anchor="start" stroke="#fff" stroke-width="0.2" >R2</text>
<text x="450" y="584" fill="#0000FF" font-size="16" text-anchor="start" stroke="#fff" stroke-width="0.2" >10k</text>
<text x="551.7" y="606" fill="#0000FF" font-size="16" text-anchor="start" stroke="#fff" stroke-width="0.2" >R4</text>
<text x="611" y="606" fill="#0000FF" font-size="16" text-anchor="start" stroke="#fff" stroke-width="0.2" >1k</text>
<text x="682.7" y="476" fill="#0000FF" font-size="16" text-anchor="start" stroke="#fff" stroke-width="0.2" >R7</text>
<text x="743" y="476" fill="#0000FF" font-size="16" text-anchor="start" stroke="#fff" stroke-width="0.2" >10k</text>
<text x="816" y="454" fill="#0000FF" font-size="16" text-anchor="start" stroke="#fff" stroke-width="0.2" >C2</text>
<text x="827" y="476" fill="#0000FF" font-size="16" text-anchor="start" stroke="#fff" stroke-width="0.2" >0.01u</text>
<text x="393" y="443" fill="#0000FF" font-size="16" text-anchor="start" stroke="#fff" stroke-width="0.2" >C1</text>
<text x="304.8" y="443" fill="#0000FF" font-size="16" text-anchor="start" stroke="#fff" stroke-width="0.2" >R6</text>
<text x="307" y="497" fill="#0000FF" font-size="16" text-anchor="start" stroke="#fff" stroke-width="0.2" >1k</text>
<text x="177" y="487" fill="#0000FF" font-size="16" text-anchor="start" stroke="#fff" stroke-width="0.2" >V3</text>
<text x="171" y="515" fill="#0000FF" font-size="16" text-anchor="start" stroke="#fff" stroke-width="0.2" >0.1V</text>
<text x="565.6" y="454" fill="#0000FF" font-size="16" text-anchor="start" stroke="#fff" stroke-width="0.2" >Q1</text>
<text x="609.2" y="530" fill="#0000FF" font-size="16" text-anchor="start" stroke="#fff" stroke-width="0.2" >Q2N2222</text>
<rect x="369.5" y="493.5" width="45" height="19" fill="#fff" stroke="#000" stroke-width="1" shape-rendering="crispEdges"/>
<text x="372" y="508" fill="#0000FF" font-size="16" text-anchor="start" stroke="#fff" stroke-width="0.2" >0.1uF</text>
<rect x="523" y="263" width="64" height="27" rx="5" ry="5" fill="#C0C0C0"/>
<rect x="527" y="266.5" width="56" height="20" rx="1.5" fill="#008000"/>
<text x="555" y="282.5" fill="#fff" font-size="16" text-anchor="middle" stroke="#008000" stroke-width="0.2" >15.00V</text>
<rect x="521" y="654" width="70" height="28" rx="5" ry="5" fill="#C0C0C0"/>
<rect x="525" y="657.5" width="62" height="21" rx="1.5" fill="#008000"/>
<text x="556" y="674" fill="#fff" font-size="16" text-anchor="middle" stroke="#008000" stroke-width="0.2" >-15.00V</text>
<rect x="662.6" y="394.5" width="69.4" height="25" rx="5" ry="5" fill="#C0C0C0"/>
<rect x="666.6" y="398" width="61.4" height="18" rx="1.5" fill="#008000"/>
<text x="697.3" y="413" fill="#fff" font-size="16" text-anchor="middle" stroke="#008000" stroke-width="0.2" >-3.773V</text>
<rect x="456.2" y="480" width="69.8" height="26.5" rx="5" ry="5" fill="#C0C0C0"/>
<rect x="460.2" y="483.5" width="61.8" height="19.5" rx="1.5" fill="#008000"/>
<text x="491.1" y="499.25" fill="#fff" font-size="16" text-anchor="middle" stroke="#008000" stroke-width="0.2" >-5.336V</text>
<rect x="597" y="537" width="70" height="27" rx="5" ry="5" fill="#C0C0C0"/>
<rect x="601" y="540.5" width="62" height="20" rx="1.5" fill="#008000"/>
<text x="632" y="556.5" fill="#fff" font-size="16" text-anchor="middle" stroke="#008000" stroke-width="0.2" >-6.039V</text>
<rect x="237.2" y="459" width="31" height="27" rx="5" ry="5" fill="#C0C0C0"/>
<rect x="241.2" y="462.5" width="23" height="20" rx="1.5" fill="#008000"/>
<text x="252.7" y="478.5" fill="#fff" font-size="16" text-anchor="middle" stroke="#008000" stroke-width="0.2" >0V</text>
<path d="M16.5 69.5H23.5L26.5 72.5V81.5H16.5Z" fill="#fff" stroke="#000"/><path d="M23.5 69.5V72.5H26.5" fill="none" stroke="#000"/>
<path d="M37.5 81.5V73.5H38.5L39.5 72.5H42.5L43.5 73.5H48.5V76" fill="#F4F080" stroke="#000"/><path d="M37.5 81.5L41 76.5H52L48.5 81.5Z" fill="#808000" stroke="#000"/><path d="M45 71Q48 68.5 50.8 71.5" fill="none" stroke="#000"/><path d="M52 69.5V73H48.8Z" fill="#000"/>
<rect x="60.5" y="69.5" width="13" height="13" fill="#FF0000" stroke="#000"/><rect x="63" y="70" width="8" height="5.5" fill="#fff"/><rect x="63" y="78" width="8.5" height="4.5" fill="#000"/><rect x="69" y="79" width="1.8" height="3" fill="#fff"/>
<path d="M94 74L96 69.5H103L101.5 74Z" fill="#fff" stroke="#000" stroke-width=".9"/><path d="M96.5 71.5H101" stroke="#808080" stroke-width=".8"/><path d="M90.5 75.5Q90.5 74 92.5 74H102.5L105.5 71.5V79L102.5 82.5H92.5Q90.5 82.5 90.5 81Z" fill="#00E0E8" stroke="#000"/><path d="M102.5 74V82.5" stroke="#007880" stroke-width="1"/><path d="M102.7 74.3L105.3 72V78.8L102.7 82Z" fill="#00989C"/><path d="M91 77.5H102.5M91 80H102.5" stroke="#000" stroke-width=".9"/>
<g transform="translate(1,1)"><path d="M127 69.5L131.5 78M132.5 69.5L128 78M127.8 78a1.9 2.2 0 1 0 0.1 0M131.7 78a1.9 2.2 0 1 0 0.1 0" fill="none" stroke="#fff" stroke-width="1.2"/></g>
<path d="M127 69.5L131.5 78M132.5 69.5L128 78M127.8 78a1.9 2.2 0 1 0 0.1 0M131.7 78a1.9 2.2 0 1 0 0.1 0" fill="none" stroke="#ACA899" stroke-width="1.2"/>
<g transform="translate(1,1)"><path d="M145.5 69.5H150L152.5 72V78.5H145.5ZM147 72.5H150M147 74.5H151M147 76.5H151" fill="none" stroke="#fff" stroke-width="1"/></g>
<path d="M145.5 69.5H150L152.5 72V78.5H145.5ZM147 72.5H150M147 74.5H151M147 76.5H151" fill="none" stroke="#ACA899" stroke-width="1"/>
<g transform="translate(1,1)"><path d="M151.5 73H156.5L159.5 76V81.5H151.5ZM153 76.5H156M153 78.5H157.5" fill="#fff" stroke="#fff" stroke-width="1"/></g>
<path d="M151.5 73H156.5L159.5 76V81.5H151.5ZM153 76.5H156M153 78.5H157.5" fill="#ECE9D8" stroke="#ACA899" stroke-width="1"/>
<g transform="translate(1,1)"><rect x="168.5" y="70.5" width="12" height="11.5" rx="1.5" fill="#fff"/></g>
<rect x="168.5" y="70.5" width="12" height="11.5" rx="1.5" fill="#ACA899"/><rect x="172" y="69" width="5" height="2.5" fill="#ACA899"/><rect x="172" y="71.3" width="5" height="1" fill="#ECE9D8"/>
<rect x="175.5" y="76.5" width="7" height="6" fill="#ECE9D8" stroke="#ACA899"/><path d="M177 78.5H180M177 80.5H181" stroke="#ACA899"/><path d="M176 83.5H183.5V77" stroke="#fff" fill="none"/>
<path d="M203.5 76.5Q206 72.5 209 73.2Q212.5 74.5 211 80" fill="none" stroke="#000080" stroke-width="1.6"/><path d="M200.3 74.2L206.2 75.8L201.2 80.2Z" fill="#000080"/>
<g transform="translate(1,1)"><path d="M232.5 76.5Q230 72.5 227 73.2Q223.5 74.5 225 80" fill="none" stroke="#fff" stroke-width="1.6"/><path d="M235.7 74.2L229.8 75.8L234.8 80.2Z" fill="#fff"/></g>
<path d="M232.5 76.5Q230 72.5 227 73.2Q223.5 74.5 225 80" fill="none" stroke="#ACA899" stroke-width="1.6"/><path d="M235.7 74.2L229.8 75.8L234.8 80.2Z" fill="#ACA899"/>
<path d="M251.8 70.8L255 68.6L262 76L258.6 78.6Z" fill="#F0E000" stroke="#000" stroke-width=".9"/><path d="M258.6 78.2L261.2 76.2Q264 78 263 81.2Q260.5 82 258.6 78.2Z" fill="#00D8F8" stroke="#0040FF" stroke-width=".9"/><path d="M252 83.5H262.5Q264 82 262.8 80.5M264.5 83.5H268" fill="none" stroke="#0000FF" stroke-width="1.3"/>
<path d="M284.9 79.4L286.2 78.2L290.9 83L289.5 84.4Z" fill="#F0E000" stroke="#000" stroke-width=".9"/>
<circle cx="281.3" cy="74.8" r="5.4" fill="#F6F5EE" stroke="#000" stroke-width="1.1" stroke-dasharray="3 0.6"/>
<path d="M277.6 74.8H285M281.3 71.1V78.5" stroke="#0000FF" stroke-width="2"/>
<path d="M307.3 78.9L308.6 77.7L313.3 82.5L311.9 83.9Z" fill="#F0E000" stroke="#000" stroke-width=".9"/>
<circle cx="303.7" cy="74.3" r="5.4" fill="#F6F5EE" stroke="#000" stroke-width="1.1" stroke-dasharray="3 0.6"/>
<path d="M301.8 74.3H305" stroke="#0000FF" stroke-width="1.6"/>
<rect x="323.5" y="72.5" width="11.5" height="8.5" fill="#F6F5EE" stroke="#000" stroke-width="1"/>
<path d="M330.1 78.9L331.4 77.7L336.1 82.5L334.7 83.9Z" fill="#F0E000" stroke="#000" stroke-width=".9"/>
<circle cx="326.5" cy="74.3" r="5.4" fill="#F6F5EE" stroke="#000" stroke-width="1.1" stroke-dasharray="3 0.6"/>
<rect x="324.2" y="72" width="4.8" height="4.8" fill="#fff" stroke="#0000FF" stroke-width="1.5"/>
<path d="M352.6 78.9L353.9 77.7L358.6 82.5L357.2 83.9Z" fill="#F0E000" stroke="#000" stroke-width=".9"/>
<circle cx="349" cy="74.3" r="5.4" fill="#F6F5EE" stroke="#000" stroke-width="1.1" stroke-dasharray="3 0.6"/>
<rect x="346" y="71.3" width="6" height="6" fill="#fff"/>
<path d="M381 71H397" stroke="#000" stroke-width="1"/>
<path d="M382 71.5L386.6 73.1L394.6 81.1L391.6 83.7L383.8 76.1Z" fill="#F0E000" stroke="#000" stroke-width=".9"/><path d="M382 71.5L386.6 73.1L383.8 76.1Z" fill="#fff" stroke="#000" stroke-width=".9"/><path d="M385.4 74.8L393.2 82.4" stroke="#000" stroke-width=".8"/><path d="M382 71.5l1.6 .6l-1 1z" fill="#000"/>
<path d="M404.3 71.4H420" stroke="#000" stroke-width="2.8"/>
<path d="M405.2 72.6L409.8 74.2L417.8 82.2L414.8 84.8L407 77.2Z" fill="#F0E000" stroke="#000" stroke-width=".9"/><path d="M405.2 72.6L409.8 74.2L407 77.2Z" fill="#fff" stroke="#000" stroke-width=".9"/><path d="M408.6 75.9L416.4 83.5" stroke="#000" stroke-width=".8"/><path d="M405.2 72.6l1.6 .6l-1 1z" fill="#000"/>
<rect x="429.6" y="69.7" width="10.8" height="13.6" fill="#F6F5EE" stroke="#000" stroke-width="1.3"/><path d="M427 72.7H429.6M427 76.5H429.6M427 80.4H429.6M440.4 74.3H442.8M440.4 78.2H442.8" stroke="#0000FF" stroke-width="1.3"/><path d="M431.5 72.7H433M431.5 76.5H433M431.5 80.4H433M437 74.3H438.5M437 78.2H438.5" stroke="#D8D4C0" stroke-width="1"/>
<path d="M450 71.5H452.5M450 75H452.5" stroke="#000"/><path d="M452.5 69.5H457.5Q461 70.5 461.5 73H463.5M452.5 69.5V77H456" fill="#fff" stroke="#000"/><path d="M455.5 84.5V78.5L457 76.5V74.8H459V76.5H461.5V74.8H463.5V76.5L465 78.5V84.5H461.5V80H459V84.5Z" fill="#000"/><rect x="456.6" y="81.5" width="1.2" height="2" fill="#fff"/><rect x="462.6" y="81.5" width="1.2" height="2" fill="#fff"/>
<path d="M610 77.8H619.6L614.8 83Z" fill="#000"/><path d="M807 77.8H816.6L811.8 83Z" fill="#000"/>
<path d="M641.5 76.5L644 72H653.5V81.5H644Z" fill="#F8F060" stroke="#000" stroke-width="1.1"/><path d="M646 74.5H652M646 76.8H652M646 79H652" stroke="#C8C040" stroke-width=".9" stroke-dasharray="1.5 1"/><path d="M638.5 74.5L642.5 78.5M638.5 78.5L642.5 74.5M638 76.5H644" stroke="#0000C0" stroke-width=".9"/>
<path d="M662 74.5H665.5M676 77.5H678.5" stroke="#000"/><path d="M665.5 72.5H670.5Q676 73.5 676 77.2Q676 81 670.5 81.8H665.5Z" fill="#fff" stroke="#000"/><path d="M669.2 76.4L675 69.2L678 71.4L671.8 78.6Z" fill="#E00000" stroke="#000" stroke-width=".7"/><path d="M670.4 77.4L676.5 70.3" stroke="#fff" stroke-width=".8"/><path d="M667.8 79.8L669.2 76.4L671.8 78.6Z" fill="#000"/>
<rect x="699.6" y="69.8" width="14.6" height="14.6" fill="#FBF8E4" stroke="#000" stroke-width="1.2"/><rect x="700.2" y="70.3" width="13.4" height="2.2" fill="#0000E0"/><path d="M701.8 74.8H704V77M701.8 79.8H704V82" fill="none" stroke="#B8B4A0" stroke-width="1.2"/><path d="M705.5 76.7H712M705.5 81.7H712" stroke="#C8C4B0" stroke-width="1.3"/>
<rect x="722.8" y="69.8" width="14.6" height="14.6" fill="#F4F060" stroke="#000" stroke-width="1.2"/><path d="M723.5 74.5H725.5V71.5H728V74.5H730.5V71.5H733V74.5H735" fill="none" stroke="#008000" stroke-width="1.2"/><path d="M724 81.5Q725.5 83.5 727.5 80.5T731 77.5Q732.5 77 733.5 79" fill="none" stroke="#0000FF" stroke-width="1.1"/><path d="M733.6 70.5V84" stroke="#E00000" stroke-width="1.4"/><path d="M732 75.5L735.5 78M735.5 72.5L732.5 80.5" stroke="#E00000" stroke-width=".8"/>
<path d="M842.3 76.6L845.1 79.4L838.1 84.4L835.7 85.6L836.7 83Z" fill="#000"/>
<circle cx="846.5" cy="74" r="4.9" fill="#fff" stroke="#000" stroke-width="1.1"/>
<text x="846.5" y="77" font-family="Liberation Serif, serif" font-size="8.5" text-anchor="middle" fill="#000" stroke="#000" stroke-width=".25">V</text>
<path d="M865.3 76.6L868.1 79.4L861.1 84.4L858.7 85.6L859.7 83Z" fill="#000"/>
<circle cx="869.5" cy="74" r="4.9" fill="#fff" stroke="#000" stroke-width="1.1"/>
<text x="869.5" y="77" font-family="Liberation Serif, serif" font-size="8.5" text-anchor="middle" fill="#000" stroke="#000" stroke-width=".25">I</text>
<path d="M868.5 84Q870 80.5 873 81.2" fill="none" stroke="#000" stroke-width="1"/><path d="M872.3 79.2L875.2 81.6L872 83.4Z" fill="#000"/>
<text x="899.2" y="83.8" font-family="Liberation Serif, serif" font-size="18.5" font-weight="bold" text-anchor="middle" fill="#000">V</text>
<text x="944.6" y="83.2" font-family="Liberation Serif, serif" font-size="19" font-weight="bold" text-anchor="middle" fill="#000">I</text>
<g transform="translate(1,1)"><path d="M913.5 73.5H919.5V80.5H929" fill="none" stroke="#fff" stroke-width="1.1"/></g>
<path d="M913.5 73.5H919.5V80.5H929" fill="none" stroke="#ACA899" stroke-width="1.1"/><circle cx="919.5" cy="80.5" r="1.6" fill="#ACA899"/>
<text x="925" y="77.5" font-family="Liberation Serif, serif" font-size="9" text-anchor="middle" fill="#ACA899">V</text>
<g transform="translate(1,1)"><path d="M959.5 79.5H975.5M966 75.2V83.8L972 79.5ZM972.3 75.2V83.8" stroke="#fff" fill="#fff" stroke-width="1.1"/></g>
<path d="M959.5 79.5H975.5M966 75.2V83.8L972 79.5ZM972.3 75.2V83.8" stroke="#ACA899" fill="#ACA899" stroke-width="1.1"/>
<text x="961.8" y="77" font-family="Liberation Serif, serif" font-size="9" text-anchor="middle" fill="#ACA899">I</text>
<path d="M11 104.5Q21.5 105.5 24 115.8" fill="none" stroke="#000" stroke-width="1.2"/><rect x="24.6" y="116.2" width="1.2" height="1.2" fill="#000"/>
<rect x="10.8" y="128" width="11.8" height="11.4" fill="none" stroke="#000" stroke-width="1.3"/>
<circle cx="17.4" cy="156" r="7" fill="none" stroke="#000" stroke-width="1.2"/>
<path d="M23.5 174.6H17.5L11.3 179.5V184.6H23.5V180H19.3V174.6" fill="none" stroke="#000" stroke-width="1.2"/>
<text x="10.5" y="205" font-size="10.5" font-weight="bold" fill="#E00000" stroke="#E00000" stroke-width=".5">A</text><text x="18.6" y="204" font-size="10.5" font-weight="bold" fill="#008000" stroke="#008000" stroke-width=".5">B</text><text x="14" y="209.6" font-size="10.5" font-weight="bold" fill="#0000FF" stroke="#0000FF" stroke-width=".5">C</text>
<rect x="10.6" y="218.8" width="14.8" height="13.6" fill="#F8F7F0" stroke="#000" stroke-width="1.2"/><path d="M17.5 222H24M17.5 224.3H24M12.5 226.7H24M12.5 229H24M12.5 224.6H16" stroke="#000" stroke-width=".9"/><text x="12" y="224.2" font-size="5.5" font-weight="bold" fill="#000">A</text>
<rect x="10" y="241.5" width="16" height="9" fill="#0000E0"/><rect x="10" y="250" width="16" height="6.5" fill="#707000"/><circle cx="22.3" cy="245.2" r="2.1" fill="#FFF000"/><path d="M15.8 243V254M13.4 245.5V249.5H15.8M18.2 244.5V248.5H15.8" fill="none" stroke="#20E020" stroke-width="1.5"/><path d="M10.5 256L14.5 253H17M19.5 253.5H23" stroke="#000" stroke-width="1.4"/><path d="M20 253.2H22.5" stroke="#fff" stroke-width=".8"/>
<rect x="6.6" y="10.6" width="17.2" height="17.4" fill="#F0F060" stroke="#000" stroke-width="1.3"/><path d="M8 13.5H12M8 16H12M8 18.5H12M8 21H10M14 13.5H17M14 16H16M18 19.5L22 24.5M22 19.5L17 25.5M13 23L16 26M20 14V26" stroke="#8A8A30" stroke-width="1" opacity=".7"/><path d="M11.5 18.5V24.5M8.5 24.5H16.5M12.5 14.5H15M12.5 17H15" stroke="#000" stroke-width="1.2"/><path d="M16.5 17.5L15.6 19.6L17.8 18.8" fill="#fff" stroke="#888" stroke-width=".5"/><path d="M17 16L23.6 9.2L26 11.4L19.4 18.4Z" fill="#D01818" stroke="#700" stroke-width=".6"/><path d="M16.4 16.4L18.8 18.8L17.6 19.6L15.6 18Z" fill="#E8E8E8"/><path d="M18.4 15.6L24.2 9.8" stroke="#F08080" stroke-width=".8"/>
<rect x="8" y="36.5" width="21" height="23.5" fill="#FAF9F2"/><path d="M10.8 37.9H23.5L27.5 41.8V58.2H10.8Z" fill="#F2F258" stroke="#000" stroke-width="1.3"/><path d="M23.5 37.9V41.8H27.5" fill="#fff" stroke="#000" stroke-width="1"/><path d="M14 41H17M14 43.5H17M14 46H17M19 41H21.5M19 43.5H22" stroke="#606020" stroke-width="1.1"/><path d="M17.5 47V55M13.5 55H21.5M17.5 50H26.5M18 44.5H21" stroke="#000" stroke-width="1.3"/>
<rect x="930" y="25" width="11" height="4" fill="#fff"/>
<path d="M958 10H977V29H958ZM960.5 14.5V26.5H974.5V14.5Z" fill="#fff" fill-rule="evenodd"/>
<path d="M988.5 11.5L1004.5 28M1004.5 11.5L988.5 28" stroke="#fff" stroke-width="3.4"/>
<rect x="950" y="49.5" width="6.5" height="2.6" fill="#5A5A5A"/>
<path d="M975.2 43.8H981.6V48M972.8 46.4H979.4V51.6H972.8Z" fill="none" stroke="#5A5A5A" stroke-width="1.5"/>
<path d="M996.6 44.6L1003.6 51.6M1003.6 44.6L996.6 51.6" stroke="#5A5A5A" stroke-width="2.1"/>
<path d="M995.5 106.5L999.5 102.5L1003.5 106.5" fill="none" stroke="#4D6185" stroke-width="2.2"/>
<path d="M995.5 822L999.5 826L1003.5 822" fill="none" stroke="#4D6185" stroke-width="2.2"/>
<path d="M47.5 841.5L43.5 845.5L47.5 849.5" fill="none" stroke="#4D6185" stroke-width="2.2"/>
<path d="M976.5 841.5L980.5 845.5L976.5 849.5" fill="none" stroke="#4D6185" stroke-width="2.2"/>
<path d="M996 168.5H1003.5M996 170.5H1003.5M996 172.5H1003.5M996 174.5H1003.5" stroke="#EEF4FE" stroke-width="1"/>
<path d="M231.5 842V849.5M233.5 842V849.5M235.5 842V849.5M237.5 842V849.5" stroke="#EEF4FE" stroke-width="1"/>
<path d="M1010.6 865.2L999.2 876.6M1010.6 870L1004 876.6M1010.6 874.8L1008.8 876.6" stroke="#fff" stroke-width="1.3"/>
<path d="M1010.6 866.6L999.2 878M1010.6 871.4L1004 878M1010.6 876.2L1008.8 878" stroke="#ACA899" stroke-width="1.7"/>
</svg>
</body></html>
